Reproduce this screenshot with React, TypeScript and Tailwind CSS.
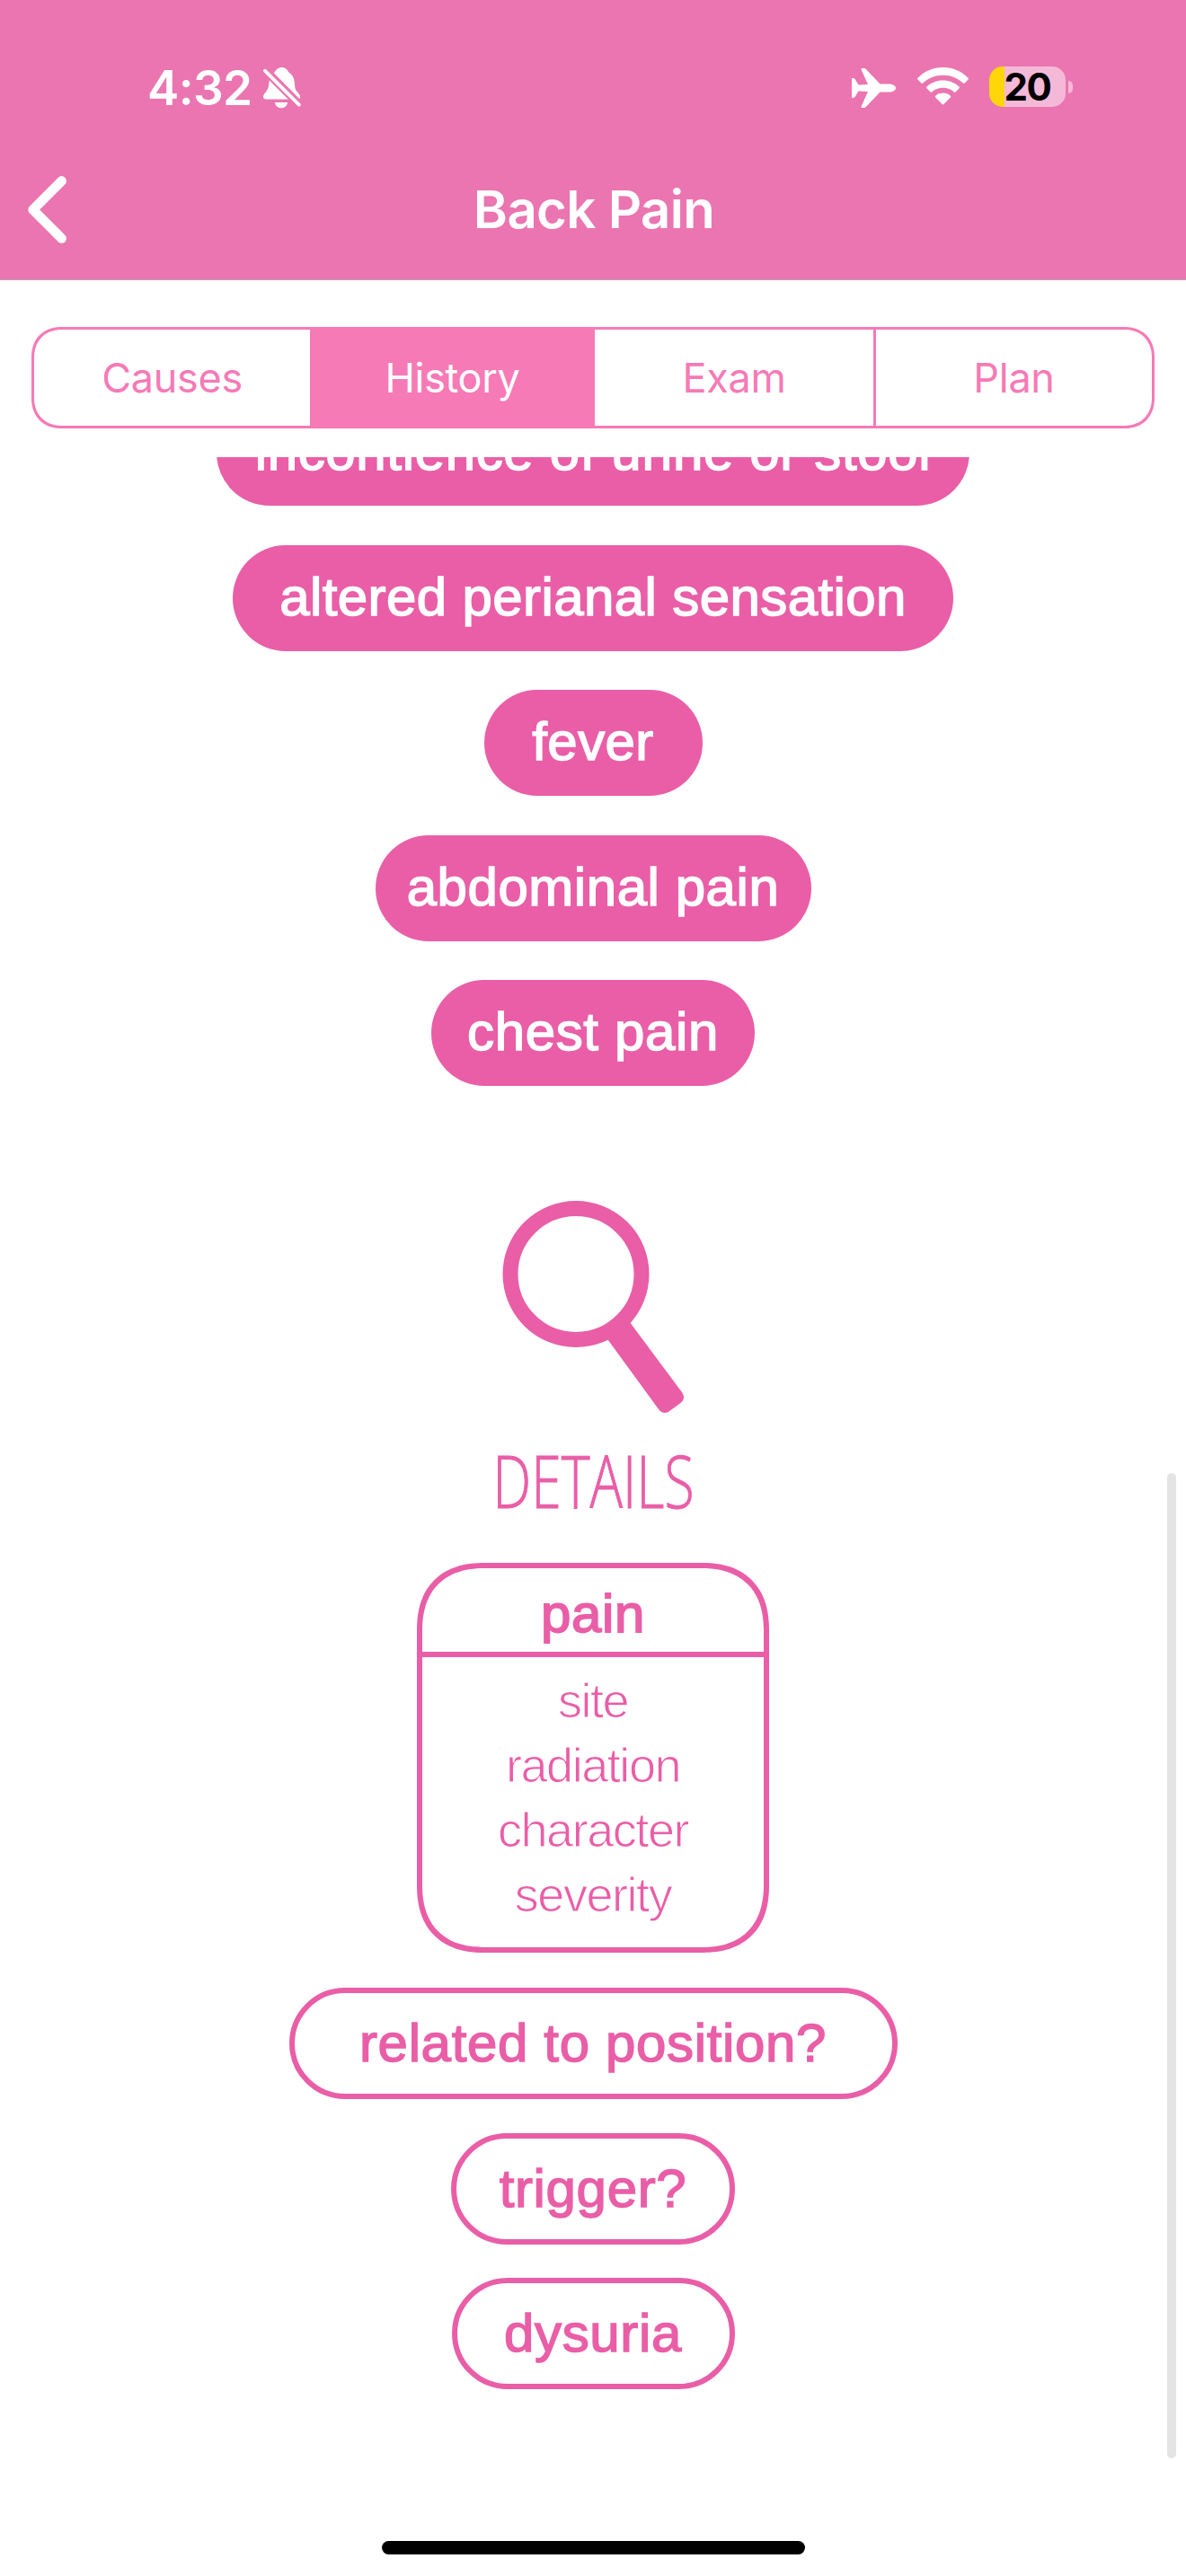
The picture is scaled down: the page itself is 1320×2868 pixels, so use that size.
const PINK = '#e95ea7';

function StatusBar() {
  return (
    <div className="flex h-[156px] items-start justify-between pt-[66px] pr-[126px] pl-[164px]">
      <div className="flex items-center">
        <span className="w-[129px] text-[53px] leading-[64px] font-semibold tracking-[-0.6px]">4:32</span>
        <svg width="42" height="46" viewBox="0 0 42 46" fill="currentColor">
          <path d="M12 6.5C14 2.5 17 0 20.5 0c3.6 0 6.300 2 7.500 5.200C33 8 34.800 13 35 19c.2 4.500 1 6.500 3 8.600 2 2 3 3.600 3 5.400 0 .9-.3 1.500-.8 1.900z" />
          <path d="M6.800 14.500 27.800 35.500H3C1.200 35.500 0 34.400 0 32.700c0-2 1.300-3.300 3.200-5.700 2.200-2.800 3-6 3.100-9.500z" />
          <path d="M13 39h14c-.3 3.600-3 6.300-7 6.300s-6.700-2.700-7-6.300z" />
          <path d="M2 3.800 39.800 41.600" stroke="#eb75b0" strokeWidth="7.500" />
          <path d="M2 3.800 39.800 41.600" stroke="currentColor" strokeWidth="3.800" strokeLinecap="round" />
        </svg>
      </div>
      <div className="flex items-start pt-2">
        <svg width="49" height="44" viewBox="0 0 49 44" fill="currentColor" className="mt-[2px]">
          <path d="M0 12c0-.8.400-1 1-1 1.500 0 2.300.600 3 1.700L7.500 18.600 18 18 10.700 1.800C10.200.7 10.600 0 11.700 0h1.800c1 0 1.700.4 2.300 1L31.500 17.400H41c4 0 8 1.700 8 4.600s-4 4.600-8 4.600H31.500L15.800 43c-.6.600-1.300 1-2.300 1h-1.800c-1.100 0-1.500-.7-1-1.800L18 26 7.500 25.400 4 31.300C3.300 32.400 2.500 33 1 33c-.6 0-1-.2-1-1z" />
        </svg>
        <svg width="57" height="42" viewBox="0 0 57 42" fill="currentColor" className="mt-[1px] ml-[24px]">
          <path d="M28.500 0C39.800 0 49.300 4.500 56.500 11.700c.6.600.6 1.200 0 1.800l-3.800 3.900c-.6.600-1.300.6-1.900 0C44.800 11.800 37 8.700 28.500 8.700S12.200 11.800 6.200 17.400c-.6.600-1.300.6-1.900 0L.5 13.500c-.6-.6-.6-1.200 0-1.800C7.700 4.500 17.200 0 28.500 0z" />
          <path d="M28.500 14.600c7.200 0 13.300 2.700 18 7 .6.600.6 1.200 0 1.800l-3.900 3.900c-.6.600-1.200.6-1.800.1-3.300-3-7.500-4.600-12.300-4.600s-9 1.600-12.300 4.600c-.6.500-1.200.5-1.800-.1l-3.900-3.900c-.6-.6-.6-1.200 0-1.800 4.700-4.300 10.800-7 18-7z" />
          <path d="M28.500 28.600c3.300 0 6.100 1.200 8.300 3.100.6.600.6 1.100 0 1.700l-7.400 7.700c-.6.600-1.200.6-1.800 0l-7.400-7.700c-.6-.6-.6-1.100 0-1.700 2.200-1.900 5-3.100 8.300-3.100z" />
        </svg>
        <div className="ml-[23px] flex h-[45px] w-[85px] items-center justify-center rounded-[15px] bg-[linear-gradient(90deg,#ffd60a_17.500px,#f5b9d8_17.500px)] text-[42px] leading-[52px] font-bold tracking-[-1.500px] text-black">
          20
        </div>
        <div className="mt-4 ml-[3px] h-[14px] w-[5px] rounded-r-full bg-[#f5b9d8]" />
      </div>
    </div>
  );
}

function NavBar() {
  return (
    <div className="grid h-[155px] grid-cols-[100px_1fr_100px]">
      <svg width="43" height="75" viewBox="0 0 43 75" fill="none" className="mt-[40px] ml-[31px]">
        <path d="M37.600 5.400 5.600 37.400l32 32" stroke="white" strokeWidth="10.600" strokeLinecap="round" strokeLinejoin="round" />
      </svg>
      <h1 className="mt-[43px] pl-[2px] text-center text-[58px] leading-[68px] font-semibold tracking-[-0.6px]">Back Pain</h1>
    </div>
  );
}

function Tabs() {
  return (
    <div className="mx-[35px] mt-[52px] flex h-[113px] overflow-hidden rounded-[34px] border-[3px] border-[#f67ab6] text-[45px] tracking-[-0.300px] text-[#f67ab6] [corner-shape:superellipse(1.15)]">
      <div className="flex w-[307px] items-center justify-center">Causes</div>
      <div className="flex w-[317px] items-center justify-center bg-[#f67ab6] text-white">History</div>
      <div className="flex w-[310px] items-center justify-center">Exam</div>
      <div className="flex flex-1 items-center justify-center border-l-[3px] border-[#f67ab6]">Plan</div>
    </div>
  );
}

const redFlags = [
  { label: 'incontience of urine or stool', width: 'w-[838px]', tracking: 'tracking-[0.650px]' },
  { label: 'altered perianal sensation', width: 'w-[802px]', tracking: 'tracking-[0.400px]' },
  { label: 'fever', width: 'w-[243px]', tracking: 'tracking-[0.400px]' },
  { label: 'abdominal pain', width: 'w-[485px]', tracking: 'tracking-[0.550px]' },
  { label: 'chest pain', width: 'w-[360px]', tracking: 'tracking-[0.650px]' },
];

const questions = [
  { label: 'related to position?', width: 'w-[677px]' },
  { label: 'trigger?', width: 'w-[316px]' },
  { label: 'dysuria', width: 'w-[315px]' },
];

const painDetails = ['site', 'radiation', 'character', 'severity'];

export default function App() {
  return (
    <div className="flex h-[2868px] w-[1320px] flex-col overflow-hidden bg-white font-['Inter',sans-serif]">
      <header className="h-[312px] shrink-0 border-b border-[#b3a5ac] bg-[#eb75b0] text-white">
        <StatusBar />
        <NavBar />
      </header>
      <Tabs />
      <main className="relative mt-[32px] flex flex-1 flex-col items-center overflow-hidden font-['Liberation_Sans',sans-serif] text-[#e95ea7]">
        <div className="-mt-[64px] flex shrink-0 flex-col items-center gap-[43.500px]">
          {redFlags.map((f) => (
            <div
              key={f.label}
              className={`${f.width} ${f.tracking} flex h-[118px] items-center justify-center rounded-full bg-[#e95ea7] pb-[2px] text-[60px] whitespace-nowrap text-white [-webkit-text-stroke:1.500px_white]`}
            >
              {f.label}
            </div>
          ))}
        </div>
        <svg width="202" height="240" viewBox="0 0 202 240" className="mt-[127px] shrink-0">
          <circle cx="82" cy="82.500" r="73" fill="none" stroke={PINK} strokeWidth="17" />
          <path d="M117.500 155.500 174 233c3 4.300 8 5 11.500 2.500l13-9.500c4-3 4.600-7.500 1.800-11.500L142.300 136.500z" fill={PINK} />
        </svg>
        <h2 className="mt-[16px] h-[110px] shrink-0 origin-center scale-x-[0.740] text-center font-['Open_Sans'] text-[82px] leading-[110px] font-light [-webkit-text-stroke:1px_#e95ea7]">DETAILS</h2>
        <section className="mt-[38px] h-[434px] w-[392px] shrink-0 rounded-[76px] border-[6px] border-[#e95ea7] [corner-shape:superellipse(1.25)]">
          <h3 className="flex h-[99px] items-center justify-center border-b-[6px] border-[#e95ea7] pt-[9px] text-[60px] font-normal tracking-[0.700px] [-webkit-text-stroke:1.800px_#e95ea7]">pain</h3>
          <ul className="pt-[12px] text-center text-[54px] leading-[72px] tracking-[-1.450px] [-webkit-text-stroke:1px_white]">
            {painDetails.map((d) => (
              <li key={d}>{d}</li>
            ))}
          </ul>
        </section>
        <div className="mt-[39px] flex shrink-0 flex-col items-center gap-[37.500px]">
          {questions.map((q) => (
            <div
              key={q.label}
              className={`${q.width} flex h-[124px] items-center justify-center rounded-full border-[6px] border-[#e95ea7] text-[60px] tracking-[0.650px] whitespace-nowrap [-webkit-text-stroke:1.500px_#e95ea7]`}
            >
              {q.label}
            </div>
          ))}
        </div>
        <div className="absolute top-[1131px] right-[11px] h-[1097px] w-[10px] rounded-full bg-[#e4e4e4]" />
        <div className="absolute bottom-[24px] left-[425px] h-[15px] w-[471px] rounded-full bg-black" />
      </main>
    </div>
  );
}
